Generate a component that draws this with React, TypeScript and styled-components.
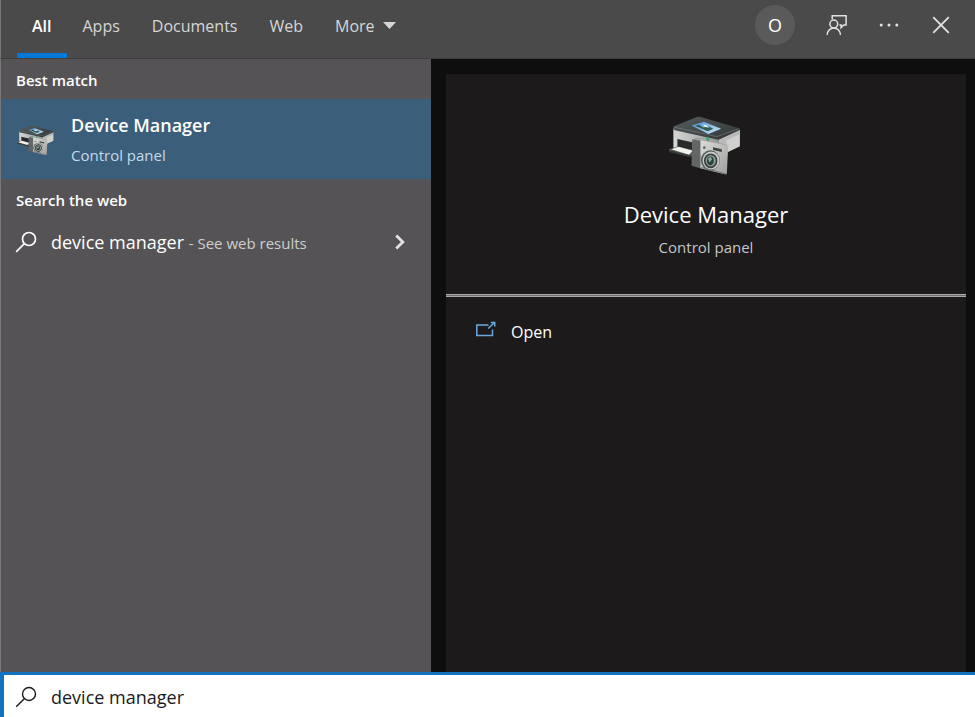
import React, { useState } from "react";
import styled, { createGlobalStyle, css } from "styled-components";

const GlobalStyle = createGlobalStyle`
  *, *::before, *::after { box-sizing: border-box; }
  body { margin: 0; background: #0f0e0f; }
  body, button, input { font-family: "Open Sans", "Noto Sans", sans-serif; }
  button { border: 0; padding: 0; margin: 0; background: none; color: inherit; cursor: pointer; }
  h1, h2, p { margin: 0; }
`;

const Shell = styled.div`
  display: flex;
  flex-direction: column;
  min-height: 100vh;
  color: #fff;
`;

const TopBar = styled.header`
  display: flex;
  justify-content: space-between;
  height: 59px;
  padding: 0 20px 0 16px;
  background: #4a4a4a;
  border-left: 1px solid #777;
  border-bottom: 1px solid #3d3d3d;
`;

const Tabs = styled.nav`
  display: flex;
`;

const Tab = styled.button<{ $active?: boolean }>`
  display: flex;
  align-items: center;
  gap: 8px;
  padding: 0 16px 2px;
  border-top: 0;
  border-bottom: 5px solid transparent;
  font-size: 16px;
  line-height: 24px;
  color: #d6d6d6;
  ${(p) =>
    p.$active &&
    css`
      padding: 0 15px 2px;
      color: #fff;
      font-weight: 600;
      border-bottom-color: #0078d7;
    `}
`;

const Tools = styled.div`
  display: flex;
  align-items: center;
  gap: 24px;
  height: 50px;
`;

const Avatar = styled.button`
  width: 40px;
  height: 40px;
  margin-right: 4px;
  border-radius: 50%;
  background: #5a5a5a;
  color: #fff;
  font-size: 18px;
  line-height: 24px;
`;

const ToolButton = styled.button`
  display: grid;
  place-items: center;
  width: 28px;
  height: 28px;
  color: #e2e2e2;
`;

const Content = styled.main`
  flex: 1;
  display: grid;
  grid-template-columns: 431px 1fr;
`;

const Results = styled.section`
  background: #555355;
  border-left: 1px solid #777;
`;

const GroupTitle = styled.h2`
  padding: 9px 15px 7px;
  font-size: 15px;
  line-height: 24px;
  font-weight: 600;
`;

const BestMatch = styled.button`
  display: flex;
  align-items: center;
  gap: 16px;
  width: 100%;
  height: 80px;
  padding: 2px 16px 0;
  background: #3b5e7b;
  text-align: left;
`;

const BestText = styled.span`
  display: flex;
  flex-direction: column;
  gap: 4px;
`;

const BestName = styled.span`
  font-size: 18px;
  line-height: 26px;
  font-weight: 600;
`;

const BestKind = styled.span`
  font-size: 15px;
  line-height: 26px;
  color: #c5d9e8;
`;

const WebResult = styled.button`
  display: flex;
  align-items: center;
  width: 100%;
  height: 48px;
  padding: 0 26px 2px 14px;
  text-align: left;
`;

const Query = styled.span`
  flex: 1;
  padding-left: 14px;
  font-size: 18px;
  line-height: 26px;
`;

const QueryHint = styled.span`
  font-size: 15px;
  color: #cfcfcf;
`;

const Preview = styled.section`
  display: flex;
  padding: 15px 9px 0 15px;
  background: #0f0e0f;
`;

const Card = styled.div`
  flex: 1;
  background: #1c1a1b;
`;

const Hero = styled.div`
  display: flex;
  flex-direction: column;
  align-items: center;
  height: 220px;
  padding-top: 42px;
`;

const Divider = styled.hr`
  height: 3px;
  margin: 0;
  border: solid #a8a8a8;
  border-width: 1px 0;
  background: #6c6c6c;
`;

const HeroName = styled.h1`
  margin-top: 22px;
  font-size: 22px;
  line-height: 32px;
  font-weight: 400;
`;

const HeroKind = styled.p`
  margin-top: 5px;
  font-size: 15px;
  line-height: 24px;
  color: #c6c6c6;
`;

const Action = styled.button`
  display: flex;
  align-items: center;
  gap: 14px;
  width: 100%;
  height: 48px;
  margin-top: 11px;
  padding: 0 29px;
  font-size: 16px;
  line-height: 24px;
  text-align: left;
`;

const SearchBar = styled.label`
  display: flex;
  align-items: center;
  gap: 14px;
  height: 45px;
  padding: 2px 12px 0 11px;
  background: #fff;
  color: #1a1a1a;
  border-top: 3px solid #1272bd;
  border-left: 4px solid #1272bd;
`;

const SearchInput = styled.input`
  flex: 1;
  min-width: 0;
  padding: 0;
  border: 0;
  outline: 0;
  background: transparent;
  color: #1a1a1a;
  font-size: 18px;
  line-height: 26px;
`;

const SearchIcon = ({ weight }: { weight: number }) => (
  <svg width="22" height="22" viewBox="0 0 22 22" fill="none" stroke="currentColor" strokeWidth={weight} aria-hidden="true">
    <circle cx="14" cy="8" r="6.5" />
    <path d="M9.3 12.7 1.2 20.8" />
  </svg>
);

const FeedbackIcon = () => (
  <svg width="22" height="22" viewBox="0 0 22 22" fill="none" stroke="currentColor" strokeWidth="1.5" aria-hidden="true">
    <path d="M6.2 5.2V1.7h13.9v9.2h-2.4l-2.6 2.7v-2.7h-1.7" />
    <circle cx="7.8" cy="10" r="3.9" />
    <path d="M1.2 21c0-4.1 2.9-7.1 6.6-7.1s6.6 3 6.6 7.1" />
  </svg>
);

const DotsIcon = () => (
  <svg width="20" height="4" viewBox="0 0 20 4" fill="currentColor" aria-hidden="true">
    <circle cx="2.2" cy="2" r="1.5" />
    <circle cx="10" cy="2" r="1.5" />
    <circle cx="17.8" cy="2" r="1.5" />
  </svg>
);

const CloseIcon = () => (
  <svg width="18" height="18" viewBox="0 0 18 18" fill="none" stroke="currentColor" strokeWidth="1.8" aria-hidden="true">
    <path d="m1.2 1.2 15.6 15.6M16.8 1.2 1.2 16.8" />
  </svg>
);

const CaretIcon = () => (
  <svg width="13" height="7" viewBox="0 0 13 7" fill="currentColor" aria-hidden="true">
    <path d="M0 0h13L6.5 7z" />
  </svg>
);

const ChevronIcon = () => (
  <svg width="10" height="16" viewBox="0 0 10 16" fill="none" stroke="#e2e2e2" strokeWidth="2.8" aria-hidden="true">
    <path d="m1.3 1.5 6.5 6.5-6.5 6.5" />
  </svg>
);

const OpenIcon = () => (
  <svg width="22" height="22" viewBox="0 0 22 22" fill="none" stroke="#68aadb" strokeWidth="1.5" aria-hidden="true">
    <path d="M13.5 4H1.8v10.600h15.700V8.500" />
    <path d="m13.2 7.500 6-5.700M15.800 1.500h3.900v3.900" />
  </svg>
);

const DeviceIcon = ({ size, id }: { size: number; id: string }) => (
  <svg width={size} height={Math.round(size * 0.81)} viewBox="57 48 220 178" aria-hidden="true">
    <defs>
      <linearGradient id={`${id}-top`} x1="0" y1="0" x2="1" y2="1">
        <stop offset="0" stopColor="#565d5d" />
        <stop offset="1" stopColor="#303637" />
      </linearGradient>
      <linearGradient id={`${id}-front`} x1="0" y1="0" x2="1" y2="0">
        <stop offset="0" stopColor="#d7d8d6" />
        <stop offset="1" stopColor="#949795" />
      </linearGradient>
      <linearGradient id={`${id}-cam`} x1="0" y1="0" x2="1" y2="1">
        <stop offset="0" stopColor="#dddcda" />
        <stop offset="1" stopColor="#9e9f9c" />
      </linearGradient>
      <linearGradient id={`${id}-screen`} x1="0" y1="0" x2="1" y2="1">
        <stop offset="0" stopColor="#4589d4" />
        <stop offset="1" stopColor="#d5eefa" />
      </linearGradient>
    </defs>
    <path d="M70 84 205 111v60L70 142z" fill={`url(#${id}-front)`} />
    <path d="m205 111 63-23v50l-63 30z" fill="#b9bab9" />
    <path d="m228 120 38-17v35l-38 18z" fill="#d0d0cf" />
    <path d="M70 79 140 51q5-2 11 0l115 33q5 3 0 6l-58 27q-5 2-12 0L74 90q-6-3-4-11z" fill={`url(#${id}-top)`} />
    <path d="m73 81 126 28 65-23" fill="none" stroke="#737a79" strokeWidth="2" />
    <path d="m124 76 37-11 51 21-38 15z" fill={`url(#${id}-screen)`} />
    <path d="m134 77 12-3 14 8 14-4 15 8-17 7z" fill="#365d4f" />
    <path d="m158 72 12 4 7 7-14-3z" fill="#e4f3fa" />
    <path d="m82 116 44 10v30l-44-11z" fill="#272b2b" />
    <path d="m57 147 24-8 49 10v23l-72-19z" fill="#5c5f5e" />
    <path d="m64 147 22-8 42 12-12 12z" fill="#f1f2ee" />
    <path d="m57 149 72 18v6l-72-18z" fill="#353a39" />
    <path d="m126 117 25-4v90l-27-7z" fill="#626665" />
    <path d="m126 117 25-4 79 20 4 4-80-15z" fill="#a5a8a5" />
    <path d="m151 120 82 16-4 83q-1 3-6 2l-73-18z" fill={`url(#${id}-cam)`} />
    <path d="m188 141 26 6v8l-26-6z" fill="#3a4340" />
    <path d="m166 114 6-5 7 8-7 6z" fill="#36a86d" />
    <circle cx="162" cy="142" r="4" fill="#616865" />
    <ellipse cx="180" cy="180" rx="28" ry="30" fill="#555b5b" />
    <ellipse cx="182" cy="180" rx="25" ry="27" fill="#c6cac8" />
    <ellipse cx="181" cy="181" rx="20" ry="22" fill="#373e3d" />
    <ellipse cx="181" cy="181" rx="15" ry="17" fill="#929b9a" />
    <ellipse cx="180" cy="181" rx="10" ry="13" fill="#294239" />
    <path d="m173 174 8-5 4 8-8 9z" fill="#84aaa1" />
    <path d="m153 201 75 19" stroke="#737977" strokeWidth="3" />
  </svg>
);

const tabs = ["All", "Apps", "Documents", "Web", "More"];

export default function App() {
  const [active, setActive] = useState("All");
  const [query, setQuery] = useState("device manager");

  return (
    <Shell>
      <GlobalStyle />
      <TopBar>
        <Tabs aria-label="Search filters">
          {tabs.map((tab) => (
            <Tab key={tab} $active={tab === active} onClick={() => setActive(tab)}>
              {tab}
              {tab === "More" && <CaretIcon />}
            </Tab>
          ))}
        </Tabs>
        <Tools>
          <Avatar aria-label="Account">O</Avatar>
          <ToolButton aria-label="Feedback"><FeedbackIcon /></ToolButton>
          <ToolButton aria-label="Options"><DotsIcon /></ToolButton>
          <ToolButton aria-label="Close"><CloseIcon /></ToolButton>
        </Tools>
      </TopBar>
      <Content>
        <Results>
          <GroupTitle>Best match</GroupTitle>
          <BestMatch>
            <DeviceIcon size={38} id="small" />
            <BestText>
              <BestName>Device Manager</BestName>
              <BestKind>Control panel</BestKind>
            </BestText>
          </BestMatch>
          <GroupTitle>Search the web</GroupTitle>
          <WebResult>
            <SearchIcon weight={1.7} />
            <Query>
              device manager <QueryHint>- See web results</QueryHint>
            </Query>
            <ChevronIcon />
          </WebResult>
        </Results>
        <Preview>
          <Card>
            <Hero>
              <DeviceIcon size={74} id="large" />
              <HeroName>Device Manager</HeroName>
              <HeroKind>Control panel</HeroKind>
            </Hero>
            <Divider />
            <Action>
              <OpenIcon />
              Open
            </Action>
          </Card>
        </Preview>
      </Content>
      <SearchBar>
        <SearchIcon weight={1.4} />
        <SearchInput aria-label="Search" value={query} onChange={(e) => setQuery(e.target.value)} />
      </SearchBar>
    </Shell>
  );
}
